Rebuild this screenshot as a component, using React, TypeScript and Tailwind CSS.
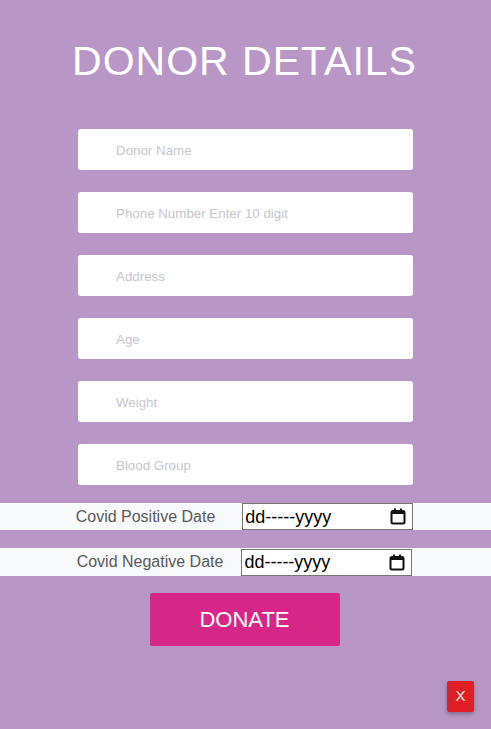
import { useState } from "react";

const fields = ["Donor Name", "Phone Number Enter 10 digit", "Address", "Age", "Weight", "Blood Group"];

function CalendarIcon() {
	return (
		<svg width="16" height="17" viewBox="0 0 16 17" fill="none">
			<rect x="1.5" y="3" width="13" height="12.5" rx="1.5" stroke="#111" strokeWidth="2" />
			<rect x="1.5" y="3" width="13" height="3" fill="#111" />
			<rect x="4" y="0.5" width="2" height="3" fill="#111" />
			<rect x="10" y="0.5" width="2" height="3" fill="#111" />
		</svg>
	);
}

function DateBox() {
	return (
		<div className="w-[171px] h-[27px] bg-white border border-[#767676] flex items-center justify-between pl-[2px] pr-[6px]">
			<span className="text-[18px] leading-none text-black">dd-----yyyy</span>
			<CalendarIcon />
		</div>
	);
}

function App() {
	const [values, setValues] = useState<string[]>(fields.map(() => ""));

	return (
		<main className="min-h-[729px] w-full bg-[#b897c7] font-['Liberation_Sans',Arial,sans-serif] pt-[40px] pb-[17px] flex flex-col">
			<h1 className="text-center text-white text-[41px] leading-[42px] tracking-[1px] pr-[2px]">DONOR DETAILS</h1>

			<div className="flex flex-col items-center gap-[22px] mt-[47px]">
				{fields.map((f, i) => (
					<input
						key={f}
						value={values[i]}
						onChange={(e) => setValues(values.map((v, j) => (j === i ? e.target.value : v)))}
						placeholder={f}
						className="w-[335px] h-[41px] bg-white rounded-[3px] pl-[38px] pt-[2px] text-[13.333px] text-gray-700 placeholder:text-[#c6c6ce] outline-none"
					/>
				))}
			</div>

			<div className="mt-[18px] bg-[#f8f9fa] h-[27px] flex items-center justify-center gap-[27px] pr-[2px]">
				<span className="text-[16px] text-[#5a5a5a]">Covid Positive Date</span>
				<DateBox />
			</div>
			<div className="mt-[18px] bg-[#f8f9fa] h-[28px] flex items-center justify-center gap-[18px] pr-[2px]">
				<span className="text-[16px] text-[#5a5a5a]">Covid Negative Date</span>
				<DateBox />
			</div>

			<div className="flex justify-center mt-[17px] pr-[1px]">
				<button className="w-[190px] h-[53px] bg-[#d62788] rounded-[2px] text-white text-[22px] pr-[1px]">DONATE</button>
			</div>

			<div className="flex justify-end mt-[35px] pr-[17px]">
				<button className="w-[27px] h-[31px] bg-[#e01e26] rounded-[2px] text-white text-[15px] shadow-[0_2px_4px_rgba(0,0,0,0.3)]">X</button>
			</div>
		</main>
	);
}

export default App;
